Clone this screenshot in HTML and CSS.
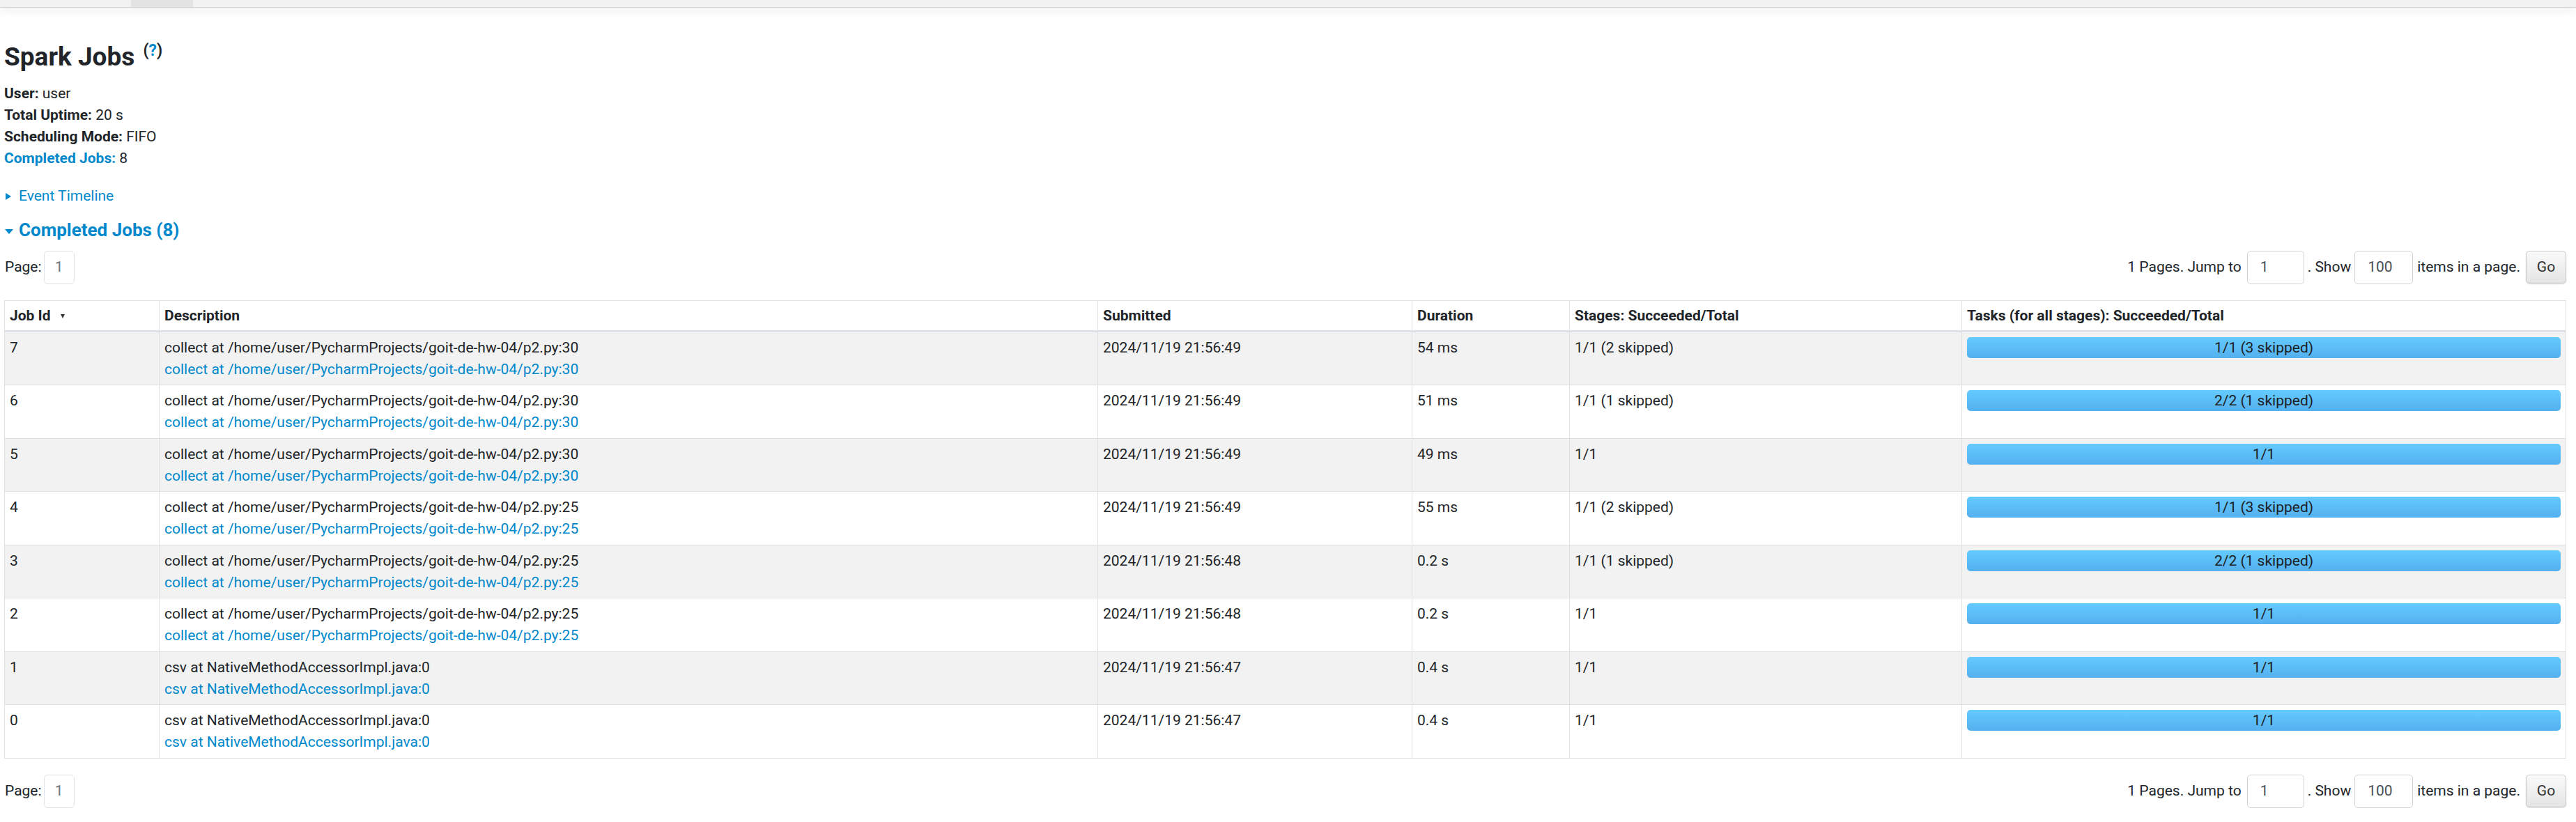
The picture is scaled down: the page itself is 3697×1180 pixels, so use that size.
FILE: index.html
```html
<!DOCTYPE html>
<html lang="en">
<head>
<meta charset="utf-8">
<title>Spark Jobs</title>
<link rel="stylesheet" href="styles.css">
</head>
<body>
<div class="navbar"><span class="nav-tab"></span></div>
<div class="content">
  <h3 class="title">Spark Jobs <sup class="help">(<a class="help-link">?</a>)</sup></h3>
  <ul class="summary">
    <li><strong>User:</strong> user</li>
    <li><strong>Total Uptime:</strong> 20 s</li>
    <li><strong>Scheduling Mode:</strong> FIFO</li>
    <li><a class="link"><strong>Completed Jobs:</strong></a> 8</li>
  </ul>
  <div class="toggle timeline-toggle"><span class="arrow-closed"></span><a class="link">Event Timeline</a></div>
  <h4 class="toggle section-title"><span class="arrow-open"></span><a class="link">Completed Jobs (8)</a></h4>

  <div class="pager">
    <div class="pager-left"><span>Page:</span><span class="page-box">1</span></div>
    <div class="pager-right">
      <span>1 Pages. Jump to</span>
      <span class="field field-jump">1</span>
      <span class="lbl-show">. Show</span>
      <span class="field field-size">100</span>
      <span class="lbl-items">items in a page.</span>
      <span class="go-btn">Go</span>
    </div>
  </div>

  <table class="jobs">
    <thead>
      <tr>
        <th class="w-id">Job Id <span class="sort-arrow"></span></th>
        <th class="w-desc">Description</th>
        <th class="w-sub">Submitted</th>
        <th class="w-dur">Duration</th>
        <th class="w-stg">Stages: Succeeded/Total</th>
        <th>Tasks (for all stages): Succeeded/Total</th>
      </tr>
    </thead>
    <tbody>
      <tr>
        <td>7</td>
        <td><span class="desc">collect at /home/user/PycharmProjects/goit-de-hw-04/p2.py:30</span><a class="link name-link">collect at /home/user/PycharmProjects/goit-de-hw-04/p2.py:30</a></td>
        <td>2024/11/19 21:56:49</td>
        <td>54 ms</td>
        <td>1/1 (2 skipped)</td>
        <td><div class="progress">1/1 (3 skipped)</div></td>
      </tr>
      <tr>
        <td>6</td>
        <td><span class="desc">collect at /home/user/PycharmProjects/goit-de-hw-04/p2.py:30</span><a class="link name-link">collect at /home/user/PycharmProjects/goit-de-hw-04/p2.py:30</a></td>
        <td>2024/11/19 21:56:49</td>
        <td>51 ms</td>
        <td>1/1 (1 skipped)</td>
        <td><div class="progress">2/2 (1 skipped)</div></td>
      </tr>
      <tr>
        <td>5</td>
        <td><span class="desc">collect at /home/user/PycharmProjects/goit-de-hw-04/p2.py:30</span><a class="link name-link">collect at /home/user/PycharmProjects/goit-de-hw-04/p2.py:30</a></td>
        <td>2024/11/19 21:56:49</td>
        <td>49 ms</td>
        <td>1/1</td>
        <td><div class="progress">1/1</div></td>
      </tr>
      <tr>
        <td>4</td>
        <td><span class="desc">collect at /home/user/PycharmProjects/goit-de-hw-04/p2.py:25</span><a class="link name-link">collect at /home/user/PycharmProjects/goit-de-hw-04/p2.py:25</a></td>
        <td>2024/11/19 21:56:49</td>
        <td>55 ms</td>
        <td>1/1 (2 skipped)</td>
        <td><div class="progress">1/1 (3 skipped)</div></td>
      </tr>
      <tr>
        <td>3</td>
        <td><span class="desc">collect at /home/user/PycharmProjects/goit-de-hw-04/p2.py:25</span><a class="link name-link">collect at /home/user/PycharmProjects/goit-de-hw-04/p2.py:25</a></td>
        <td>2024/11/19 21:56:48</td>
        <td>0.2 s</td>
        <td>1/1 (1 skipped)</td>
        <td><div class="progress">2/2 (1 skipped)</div></td>
      </tr>
      <tr>
        <td>2</td>
        <td><span class="desc">collect at /home/user/PycharmProjects/goit-de-hw-04/p2.py:25</span><a class="link name-link">collect at /home/user/PycharmProjects/goit-de-hw-04/p2.py:25</a></td>
        <td>2024/11/19 21:56:48</td>
        <td>0.2 s</td>
        <td>1/1</td>
        <td><div class="progress">1/1</div></td>
      </tr>
      <tr>
        <td>1</td>
        <td><span class="desc">csv at NativeMethodAccessorImpl.java:0</span><a class="link name-link">csv at NativeMethodAccessorImpl.java:0</a></td>
        <td>2024/11/19 21:56:47</td>
        <td>0.4 s</td>
        <td>1/1</td>
        <td><div class="progress">1/1</div></td>
      </tr>
      <tr>
        <td>0</td>
        <td><span class="desc">csv at NativeMethodAccessorImpl.java:0</span><a class="link name-link">csv at NativeMethodAccessorImpl.java:0</a></td>
        <td>2024/11/19 21:56:47</td>
        <td>0.4 s</td>
        <td>1/1</td>
        <td><div class="progress">1/1</div></td>
      </tr>
    </tbody>
  </table>

  <div class="pager pager-bottom">
    <div class="pager-left"><span>Page:</span><span class="page-box">1</span></div>
    <div class="pager-right">
      <span>1 Pages. Jump to</span>
      <span class="field field-jump">1</span>
      <span class="lbl-show">. Show</span>
      <span class="field field-size">100</span>
      <span class="lbl-items">items in a page.</span>
      <span class="go-btn">Go</span>
    </div>
  </div>
</div>
</body>
</html>
```
FILE: styles.css
```css
html, body {
  margin: 0;
  padding: 0;
  background: #ffffff;
}

body {
  font-family: "Segoe UI", Roboto, "Noto Sans", "Liberation Sans", sans-serif;
  font-size: 21px;
  line-height: 31px;
  color: #212529;
}

.navbar {
  display: flex;
  height: 10px;
  background: #f2f2f2;
  border-bottom: 1px solid #d2d2d2;
  box-shadow: 0 4px 14px rgba(0, 0, 0, 0.07);
}

.nav-tab {
  display: block;
  margin-left: 188px;
  width: 89px;
  height: 10px;
  background: #e3e3e3;
}

.content {
  padding: 0 14px 0 6px;
}

.link {
  color: #0088cc;
  text-decoration: none;
}

.title {
  margin: 49px 0 0;
  font-size: 37px;
  line-height: 44px;
  font-weight: 700;
  color: #212529;
}

.help {
  font-size: 23px;
  line-height: 0;
  position: relative;
  top: -14px;
  margin-left: 3px;
  vertical-align: baseline;
}

.help-link {
  color: #0088cc;
}

.summary {
  list-style: none;
  margin: 15px 0 0;
  padding: 0;
}

.summary strong {
  font-weight: 700;
}

.toggle {
  display: flex;
  align-items: center;
}

.timeline-toggle {
  margin-top: 23px;
}

.arrow-closed {
  display: block;
  width: 0;
  height: 0;
  border-top: 5.5px solid transparent;
  border-bottom: 5.5px solid transparent;
  border-left: 8px solid #0088cc;
  margin: 1px 11px 0 2px;
}

.section-title {
  margin: 15.5px 0 0;
  font-size: 26px;
  line-height: 34px;
  font-weight: 700;
}

.arrow-open {
  display: block;
  width: 0;
  height: 0;
  border-left: 6px solid transparent;
  border-right: 6px solid transparent;
  border-top: 7px solid #0088cc;
  margin: 5px 8px 0 1px;
}

.pager {
  display: flex;
  justify-content: space-between;
  align-items: center;
  height: 48px;
  margin-top: 13px;
}

.pager-bottom {
  margin-top: 23px;
}

.pager-left {
  display: flex;
  align-items: center;
  padding-left: 1px;
}

.page-box {
  display: flex;
  align-items: center;
  justify-content: center;
  box-sizing: border-box;
  width: 44px;
  height: 48px;
  margin-left: 3px;
  border: 1px solid #dee2e6;
  border-radius: 5px;
  color: #6c757d;
}

.pager-right {
  display: flex;
  align-items: center;
}

.field {
  display: flex;
  align-items: center;
  box-sizing: border-box;
  height: 48px;
  padding-left: 18px;
  border: 1px solid #ced4da;
  border-radius: 5px;
  color: #495057;
  background: #fff;
}

.field-jump {
  width: 82px;
  margin-left: 8px;
}

.field-size {
  width: 84px;
  margin-left: 5px;
}

.lbl-show {
  margin-left: 5px;
}

.lbl-items {
  margin-left: 6px;
}

.go-btn {
  display: flex;
  align-items: center;
  justify-content: center;
  box-sizing: border-box;
  width: 58px;
  height: 47px;
  margin-left: 8px;
  border: 1px solid #c9c9c9;
  border-radius: 5px;
  background: linear-gradient(to bottom, #fafafa, #e4e4e4);
  box-shadow: 0 1px 2px rgba(0, 0, 0, 0.12);
  color: #333;
}

.jobs {
  width: 100%;
  margin-top: 23px;
  border-collapse: collapse;
  table-layout: fixed;
  border: 1px solid #dee2e6;
}

.jobs th {
  box-sizing: border-box;
  text-align: left;
  font-weight: 700;
  padding: 6px 7px 5px;
  border: 1px solid #dee2e6;
  border-bottom: 3px solid #dee2e6;
  vertical-align: bottom;
  white-space: nowrap;
}

.jobs td {
  padding: 7px 7px 6.5px;
  border: 1px solid #dee2e6;
  vertical-align: top;
  white-space: nowrap;
}

.jobs tbody tr:nth-child(odd) {
  background: #f2f2f2;
}

.w-id { width: 222px; }
.w-desc { width: 1347px; }
.w-sub { width: 451px; }
.w-dur { width: 226px; }
.w-stg { width: 563px; }

.sort-arrow {
  display: inline-block;
  width: 0;
  height: 0;
  border-left: 3px solid transparent;
  border-right: 3px solid transparent;
  border-top: 6px solid #333;
  margin-left: 9px;
  vertical-align: middle;
}

.desc {
  display: block;
}

.name-link {
  display: block;
}

.progress {
  display: flex;
  align-items: center;
  justify-content: center;
  height: 30px;
  line-height: 30px;
  border-radius: 5px;
  background: linear-gradient(to bottom, #64cbff, #54b0ee);
  color: #1c2024;
}
```
